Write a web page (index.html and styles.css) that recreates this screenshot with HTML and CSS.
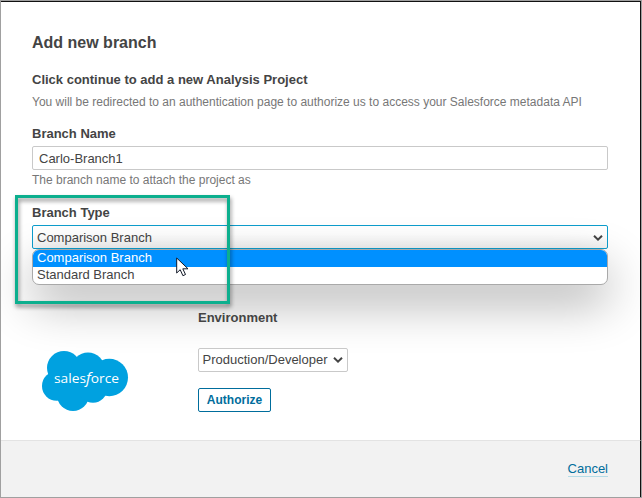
FILE: index.html
```html
<!DOCTYPE html>
<html lang="en">
<head>
<meta charset="utf-8">
<title>Add new branch</title>
<link rel="stylesheet" href="styles.css">
</head>
<body>
<main class="dialog">
  <div class="content">
    <h1 class="title">Add new branch</h1>
    <h2 class="lead">Click continue to add a new Analysis Project</h2>
    <p class="note intro">You will be redirected to an authentication page to authorize us to access your Salesforce metadata API</p>
    <div class="label name-label">Branch Name</div>
    <div class="field name-field">Carlo-Branch1</div>
    <p class="note help">The branch name to attach the project as</p>
    <div class="label type-label">Branch Type</div>
    <div class="select-wrap">
      <div class="field select active"><span>Comparison Branch</span>
        <svg class="chevron" width="10" height="6" viewBox="0 0 10 6"><path d="M1 .8 5 4.6 9 .8"/></svg>
      </div>
      <div class="options">
        <div class="option selected">Comparison Branch</div>
        <div class="option">Standard Branch</div>
      </div>
    </div>
    <div class="connection">
      <svg class="logo" width="88" height="62" viewBox="0 0 88 62">
        <g fill="#00a1e0">
          <circle cx="23" cy="18" r="17"/><circle cx="47" cy="19" r="16.500"/><circle cx="68.300" cy="27.500" r="18.700"/><circle cx="15.700" cy="36" r="14.700"/><circle cx="32" cy="45" r="16"/><circle cx="52" cy="38.500" r="14.300"/><path d="M13 18h53v24H18z"/>
        </g>
        <text x="13" y="32.500" textLength="65" lengthAdjust="spacingAndGlyphs">sales<tspan class="slant">f</tspan>orce</text>
      </svg>
      <div class="environment">
        <div class="label">Environment</div>
        <div class="field select env-select"><span>Production/Developer</span>
          <svg class="chevron" width="10" height="6" viewBox="0 0 10 6"><path d="M1 .8 5 4.6 9 .8"/></svg>
        </div>
        <div class="authorize">Authorize</div>
      </div>
    </div>
  </div>
  <footer class="footer"><a class="cancel">Cancel</a></footer>
  <div class="highlight"></div>
  <svg class="cursor" width="13" height="20" viewBox="0 0 13 20"><path d="M.7 1v15l3.500-3.300 2.700 6 2.600-1.200-2.700-5.700H12z" fill="#fff" stroke="#111827"/></svg>
</main>
</body>
</html>
```
FILE: styles.css
```css
* { box-sizing: border-box; }
body {
  margin: 0;
  font: 13px/20px "Liberation Sans", Arial, sans-serif;
  color: #444;
  background: #a0a0a0;
}
.dialog {
  position: relative;
  width: 642px;
  height: 498px;
  border: 1px solid #a0a0a0;
  overflow: hidden;
  display: flex;
  flex-direction: column;
}
.content {
  height: 439px;
  padding: 31px 32px 0 31px;
  background: #fff;
  border-top: 1px solid #111;
  border-right: 1px solid #111;
}
.title { margin: 0; font-size: 16px; line-height: 20px; }
.lead { margin: 17px 0 0; font-size: 13px; line-height: 20px; }
.note { margin: 0; font-size: 12px; line-height: 20px; color: #777; }
.intro { margin-top: 2px; white-space: nowrap; }
.label { font-weight: bold; }
.name-label { margin-top: 12px; }
.field {
  height: 24px;
  border: 1px solid #c9c9c9;
  border-radius: 2px;
  background: #fff;
  line-height: 22px;
}
.name-field { margin-top: 2px; padding: 1px 0 0 6px; }
.type-label { margin-top: 13px; }
.select-wrap { position: relative; margin-top: 2px; }
.select {
  display: flex;
  align-items: center;
  justify-content: space-between;
  padding: 0 4px;
}
.active { padding-top: 1px; border-color: #0d9dcc; background: linear-gradient(#fff 35%, #f3f3f3); }
.chevron { fill: none; stroke: #444; stroke-width: 2; }
.options {
  position: absolute;
  top: 24px;
  left: 0;
  right: 0;
  height: 36px;
  border: 1px solid #a9a9a9;
  border-radius: 7px;
  overflow: hidden;
  background: #fff;
  box-shadow: 0 18px 48px rgba(0, 0, 0, .32);
}
.option { height: 17px; padding-left: 4px; line-height: 16px; }
.selected { color: #fff; background: #0090ff; }
.connection { position: relative; display: flex; margin-top: 59px; }
.logo { margin: 42px 0 0 9px; }
.logo text { fill: #fff; font: 12.500px "Open Sans", sans-serif; }
.logo .slant { font-style: italic; font-size: 14px; }
.environment { margin-left: 69px; }
.env-select { width: 150px; margin-top: 20px; padding-left: 3.500px; }
.authorize {
  width: 73px;
  height: 24px;
  margin-top: 16px;
  border: 1px solid #006d9c;
  border-radius: 2px;
  color: #006d9c;
  background: #fff;
  font-size: 12px;
  font-weight: bold;
  line-height: 22px;
  text-align: center;
}
.footer {
  display: flex;
  flex: 1;
  justify-content: flex-end;
  padding: 21px 32px 0 0;
  border-top: 1px solid #e3e3e3;
  border-right: 1px solid #111;
  background: #f2f2f2;
}
.cancel { height: 15px; color: #006d9c; line-height: 14px; border-bottom: 1px solid #b5dce7; }
.highlight {
  position: absolute;
  top: 194px;
  left: 14px;
  width: 215px;
  height: 109px;
  border: 3px solid #0caf8e;
  filter: drop-shadow(1px 3px 2px rgba(0, 0, 0, .45));
}
.cursor { position: absolute; left: 175px; top: 256px; }
```
